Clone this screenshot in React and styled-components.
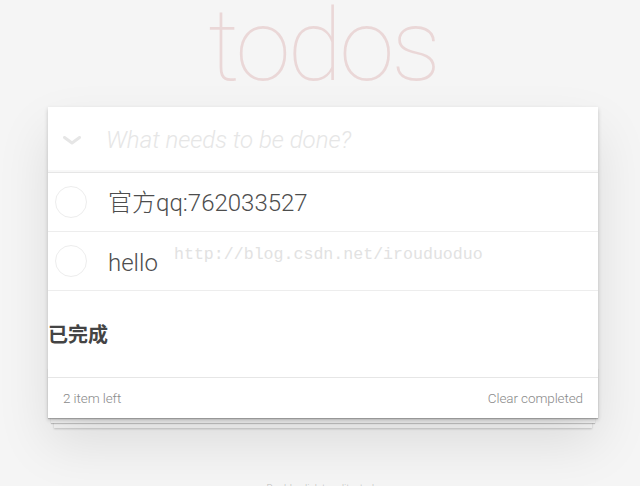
import React from 'react'
import styled, { createGlobalStyle } from 'styled-components'

const GlobalStyle = createGlobalStyle`
  html, body {
    margin: 0;
    padding: 0;
  }
  body {
    background: #f5f5f5;
    color: #4d4d4d;
    font-family: Roboto, "Helvetica Neue", "Noto Sans CJK SC", sans-serif;
    font-weight: 300;
    -webkit-font-smoothing: antialiased;
  }
`

const todos = [
  { id: 1, title: '官方qq:762033527' },
  { id: 2, title: 'hello' },
]

const Page = styled.div`
  width: 550px;
  margin-left: 48px;
  position: relative;
`

const Title = styled.h1`
  margin: 0;
  height: 107px;
  font-size: 100px;
  line-height: 92px;
  font-weight: 100;
  letter-spacing: -3px;
  text-align: center;
  color: rgba(175, 47, 47, 0.15);
`

const Card = styled.section`
  position: relative;
  background: #fff;
  box-shadow: 0 2px 4px 0 rgba(0, 0, 0, 0.2), 0 25px 50px 0 rgba(0, 0, 0, 0.1);
`

const Header = styled.header`
  display: flex;
  align-items: center;
  height: 66px;
  box-shadow: inset 0 -2px 1px rgba(0, 0, 0, 0.03);
  border-bottom: 1px solid #e6e6e6;
  box-sizing: border-box;
`

const ToggleAll = styled.svg`
  width: 18px;
  height: 9px;
  margin: 2px 27px 0 15px;
  flex-shrink: 0;
`

const NewTodo = styled.input`
  flex: 1;
  border: none;
  outline: none;
  background: transparent;
  font-family: inherit;
  font-size: 24px;
  font-weight: 300;
  padding: 0;
  margin-top: 1px;
  margin-left: -2px;
  color: #4d4d4d;

  &::placeholder {
    font-style: italic;
    font-weight: 300;
    color: #e6e6e6;
  }
`

const List = styled.ul`
  margin: 0;
  padding: 0;
  list-style: none;
`

const Item = styled.li`
  display: flex;
  align-items: center;
  height: 59px;
  box-sizing: border-box;
  border-bottom: 1px solid #ededed;
`

const Check = styled.span`
  width: 32px;
  height: 32px;
  margin: 0 21px 0 7px;
  box-sizing: border-box;
  border: 1px solid #ededed;
  border-radius: 50%;
  flex-shrink: 0;
`

const Label = styled.label`
  font-size: 24px;
  line-height: 1.2;
  color: #4d4d4d;
  margin-top: ${p => (p.$latin ? 4 : 2)}px;
`

const Watermark = styled.span`
  position: absolute;
  left: 126px;
  top: 245px;
  font-family: "Liberation Mono", monospace;
  font-size: 16.6px;
  color: #e2e2e2;
  white-space: nowrap;
  pointer-events: none;
`

const Done = styled.h3`
  margin: 0;
  height: 86px;
  display: flex;
  align-items: center;
  font-family: "Noto Sans CJK SC", sans-serif;
  font-size: 20px;
  font-weight: 700;
  color: #444;
  margin-top: -1px;
  padding-bottom: 1px;
`

const Footer = styled.footer`
  position: relative;
  display: flex;
  justify-content: space-between;
  align-items: center;
  height: 41px;
  box-sizing: border-box;
  padding: 0 15px;
  border-top: 1px solid #e6e6e6;

  &::before {
    content: '';
    position: absolute;
    right: 0;
    bottom: 0;
    left: 0;
    height: 50px;
    overflow: hidden;
    z-index: -1;
    box-shadow: 0 1px 1px rgba(0, 0, 0, 0.2),
      0 8px 0 -3px #f6f6f6,
      0 9px 1px -3px rgba(0, 0, 0, 0.2),
      0 16px 0 -6px #f6f6f6,
      0 17px 2px -6px rgba(0, 0, 0, 0.2);
  }
`

const FooterText = styled.span`
  position: relative;
  font-size: 13.5px;
  color: #8a8a8a;
  letter-spacing: -0.1px;
`

const Info = styled.p`
  margin: 65px 0 0;
  text-align: center;
  font-size: 10px;
  color: #bfbfbf;
`

export default function App() {
  return (
    <>
      <GlobalStyle />
      <Page>
        <Title>todos</Title>
        <Card>
          <Header>
            <ToggleAll viewBox="0 0 18 9">
              <polyline
                points="1.5,1.5 9,7 16.5,1.5"
                fill="none"
                stroke="#e6e6e6"
                strokeWidth="3"
                strokeLinejoin="round"
                strokeLinecap="round"
              />
            </ToggleAll>
            <NewTodo placeholder="What needs to be done?" />
          </Header>
          <List>
            {todos.map(todo => (
              <Item key={todo.id}>
                <Check />
                <Label $latin={todo.id === 2}>{todo.title}</Label>
              </Item>
            ))}
          </List>
          <Done>已完成</Done>
          <Footer>
            <FooterText>2 item left</FooterText>
            <FooterText>Clear completed</FooterText>
          </Footer>
        </Card>
        <Watermark>http://blog.csdn.net/irouduoduo</Watermark>
        <Info>Double-click to edit a todo</Info>
      </Page>
    </>
  )
}
